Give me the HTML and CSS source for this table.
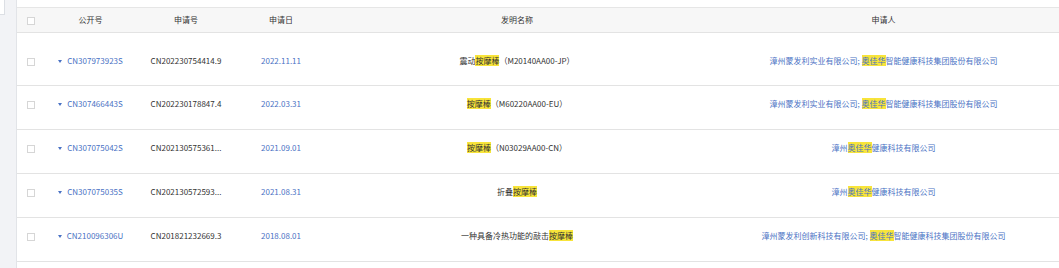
FILE: index.html
```html
<!DOCTYPE html>
<html lang="zh-CN">
<head>
<meta charset="utf-8">
<link rel="stylesheet" href="styles.css">
</head>
<body>
<div class="page">
  <aside class="gutter"><div class="mini"></div></aside>
  <main class="main">
    <table class="grid">
      <colgroup>
        <col class="c-check"><col class="c-pub"><col class="c-app"><col class="c-date"><col class="c-title"><col class="c-owner">
      </colgroup>
      <thead>
        <tr>
          <th><span class="cb"></span></th>
          <th>公开号</th>
          <th>申请号</th>
          <th>申请日</th>
          <th>发明名称</th>
          <th>申请人</th>
        </tr>
      </thead>
      <tbody>
        <tr class="first">
          <td><span class="cb"></span></td>
          <td class="link"><span class="tri"></span>CN307973923S</td>
          <td class="num"><div class="ell">CN202230754414.9</div></td>
          <td class="link">2022.11.11</td>
          <td>震动<mark>按摩棒</mark>（M20140AA00-JP）</td>
          <td class="link">漳州蒙发利实业有限公司; <mark>奥佳华</mark>智能健康科技集团股份有限公司</td>
        </tr>
        <tr>
          <td><span class="cb"></span></td>
          <td class="link"><span class="tri"></span>CN307466443S</td>
          <td class="num"><div class="ell">CN202230178847.4</div></td>
          <td class="link">2022.03.31</td>
          <td><mark>按摩棒</mark>（M60220AA00-EU）</td>
          <td class="link">漳州蒙发利实业有限公司; <mark>奥佳华</mark>智能健康科技集团股份有限公司</td>
        </tr>
        <tr>
          <td><span class="cb"></span></td>
          <td class="link"><span class="tri"></span>CN307075042S</td>
          <td class="num"><div class="ell">CN202130575361...</div></td>
          <td class="link">2021.09.01</td>
          <td><mark>按摩棒</mark>（N03029AA00-CN）</td>
          <td class="link">漳州<mark>奥佳华</mark>健康科技有限公司</td>
        </tr>
        <tr>
          <td><span class="cb"></span></td>
          <td class="link"><span class="tri"></span>CN307075035S</td>
          <td class="num"><div class="ell">CN202130572593...</div></td>
          <td class="link">2021.08.31</td>
          <td>折叠<mark>按摩棒</mark></td>
          <td class="link">漳州<mark>奥佳华</mark>健康科技有限公司</td>
        </tr>
        <tr>
          <td><span class="cb"></span></td>
          <td class="link"><span class="tri"></span>CN210096306U</td>
          <td class="num"><div class="ell">CN201821232669.3</div></td>
          <td class="link">2018.08.01</td>
          <td>一种具备冷热功能的敲击<mark>按摩棒</mark></td>
          <td class="link">漳州蒙发利创新科技有限公司; <mark>奥佳华</mark>智能健康科技集团股份有限公司</td>
        </tr>
      </tbody>
    </table>
  </main>
</div>
</body>
</html>
```

FILE: styles.css
```css
html, body {
  margin: 0;
  padding: 0;
  background: #ffffff;
}
body {
  font-family: "Noto Sans CJK SC", "Noto Sans", sans-serif;
  font-size: 8px;
  color: #333333;
}
.page {
  display: flex;
  width: 1059px;
  height: 268px;
  overflow: hidden;
}
.gutter {
  width: 16px;
  flex: none;
  background: #f2f3f6;
  border-right: 1px solid #e2e4e8;
}
.mini {
  width: 4px;
  height: 14px;
  background: #ffffff;
  border: 1px solid #dcdfe4;
  border-left: none;
  border-top: none;
}
.main {
  flex: 1;
  padding-top: 7px;
  background: #ffffff;
}
.grid {
  width: 100%;
  border-collapse: collapse;
  table-layout: fixed;
}
.c-check { width: 28px; }
.c-pub { width: 91px; }
.c-app { width: 100px; }
.c-date { width: 90px; }
.c-title { width: 382px; }
th {
  height: 24px;
  padding: 0;
  background: #f7f7f7;
  border-top: 1px solid #e6e6e6;
  border-bottom: 1px solid #e3e3e3;
  font-weight: normal;
  color: #333333;
  text-align: center;
  line-height: 12px;
}
td {
  height: 31px;
  padding: 12px 12px 0;
  border-bottom: 1px solid #e3e3e3;
  text-align: center;
  vertical-align: top;
  white-space: nowrap;
  line-height: 12px;
}
td:first-child { padding-left: 0; padding-right: 0; }
th:first-child { padding: 0; }
tr.first td {
  height: 30px;
  padding-top: 22px;
}
.num { color: #333333; }
.ell {
  overflow: hidden;
  text-overflow: ellipsis;
  text-align: center;
}
.link { color: #4a72c4; }
.cb {
  display: inline-block;
  width: 6px;
  height: 6px;
  border: 1px solid #d6d6d6;
  background: #ffffff;
  vertical-align: middle;
}
.tri {
  display: inline-block;
  width: 0;
  height: 0;
  border-left: 2.5px solid transparent;
  border-right: 2.5px solid transparent;
  border-top: 3px solid #4a72c4;
  margin-right: 5px;
  vertical-align: middle;
}
mark {
  background: #f8e43a;
  color: inherit;
}
```
